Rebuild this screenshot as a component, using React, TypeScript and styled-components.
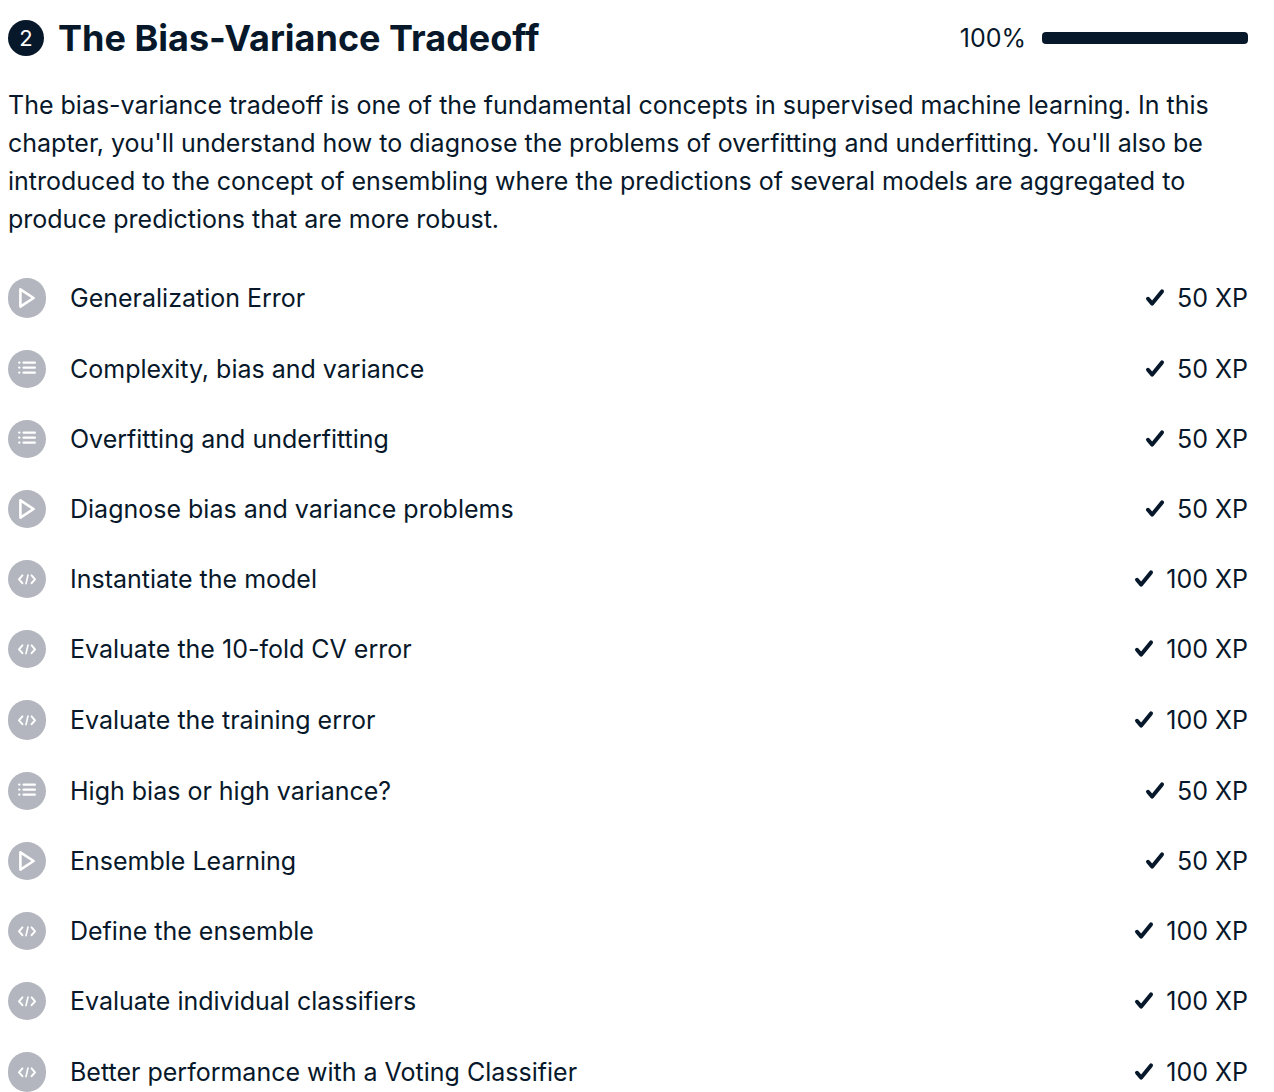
import React from "react";
import styled, { createGlobalStyle } from "styled-components";

const ink = "#07182a";

const GlobalStyle = createGlobalStyle`
  *, *::before, *::after { box-sizing: border-box; }
  body {
    margin: 0;
    background: #ffffff;
    color: ${ink};
    font-family: Inter, "Liberation Sans", sans-serif;
    font-size: 25px;
    line-height: 38px;
  }
`;

const Chapter = styled.main`
  padding: 18px 26px 0 8px;
`;

const Header = styled.header`
  display: flex;
  align-items: center;
  gap: 14px;
  height: 40px;
`;

const ChapterNumber = styled.span`
  display: flex;
  align-items: center;
  justify-content: center;
  flex: none;
  width: 36px;
  height: 36px;
  border-radius: 50%;
  background: ${ink};
  color: #ffffff;
  font-size: 22px;
  line-height: 36px;
`;

const Title = styled.h1`
  flex: 1;
  margin: 0;
  font-size: 36px;
  line-height: 40px;
  font-weight: 700;
`;

const Progress = styled.div`
  display: flex;
  align-items: center;
  gap: 16px;
`;

const Track = styled.div`
  width: 206px;
  height: 12px;
  border-radius: 4px;
  overflow: hidden;
  background: #e5e1da;
`;

const Fill = styled.div`
  height: 100%;
  background: ${ink};
`;

const Description = styled.p`
  margin: 28px 0 40px;
`;

const List = styled.ul`
  display: flex;
  flex-direction: column;
  gap: 32px;
  margin: 0;
  padding: 0;
  list-style: none;
`;

const Exercise = styled.a`
  display: flex;
  align-items: center;
  color: inherit;
  text-decoration: none;
`;

const Badge = styled.span<{ $tall?: boolean }>`
  display: flex;
  align-items: center;
  justify-content: center;
  flex: none;
  width: 38px;
  height: ${(p) => (p.$tall ? 40 : 38)}px;
  margin-right: 24px;
  border-radius: 19px;
  background: #b3b6be;
  color: #ffffff;
`;

const Name = styled.span`
  flex: 1;
`;

const Points = styled.span`
  display: flex;
  align-items: center;
  gap: 12px;
`;

type Kind = "video" | "choice" | "code";

const Glyph = ({ kind }: { kind: Kind }) => {
  if (kind === "video")
    return (
      <svg width="20" height="22" viewBox="0 0 20 22" fill="none" stroke="currentColor" strokeWidth="2.6" strokeLinejoin="round" aria-hidden="true">
        <path d="M3.4 2.4 L16.6 11 L3.4 19.6 Z" />
      </svg>
    );
  if (kind === "choice")
    return (
      <svg width="20" height="16" viewBox="0 0 20 16" fill="none" stroke="currentColor" strokeWidth="2.4" strokeLinecap="round" aria-hidden="true">
        <path d="M6.6 1.6H17.8M6.6 6.6H17.8M6.6 11.6H17.8" />
        <path d="M2.2 1.6H2.4M2.2 6.6H2.4M2.2 11.6H2.4" strokeWidth="2.3" />
      </svg>
    );
  return (
    <svg width="20" height="14" viewBox="0 0 20 14" fill="none" stroke="currentColor" strokeWidth="2" strokeLinecap="round" strokeLinejoin="round" aria-hidden="true">
      <path d="M5.4 3.4 L2 7.3 L5.4 11.2M14.6 3.4 L18 7.3 L14.6 11.2" />
      <path d="M11 3 L9 11.6" strokeWidth="1.6" />
    </svg>
  );
};

const Check = () => (
  <svg width="20" height="20" viewBox="0 0 20 20" fill="none" stroke="currentColor" strokeWidth="4" strokeLinecap="round" strokeLinejoin="round" role="img" aria-label="Completed">
    <path d="M3 10.8 L7.2 15.6 L17 3.4" />
  </svg>
);

const exercises: { name: string; kind: Kind; xp: number; tall?: boolean }[] = [
  { name: "Generalization Error", kind: "video", xp: 50, tall: true },
  { name: "Complexity, bias and variance", kind: "choice", xp: 50 },
  { name: "Overfitting and underfitting", kind: "choice", xp: 50 },
  { name: "Diagnose bias and variance problems", kind: "video", xp: 50 },
  { name: "Instantiate the model", kind: "code", xp: 100 },
  { name: "Evaluate the 10-fold CV error", kind: "code", xp: 100 },
  { name: "Evaluate the training error", kind: "code", xp: 100, tall: true },
  { name: "High bias or high variance?", kind: "choice", xp: 50 },
  { name: "Ensemble Learning", kind: "video", xp: 50 },
  { name: "Define the ensemble", kind: "code", xp: 100 },
  { name: "Evaluate individual classifiers", kind: "code", xp: 100 },
  { name: "Better performance with a Voting Classifier", kind: "code", xp: 100, tall: true },
];

const progress = 100;

export default function App() {
  return (
    <>
      <GlobalStyle />
      <Chapter>
        <Header>
          <ChapterNumber>2</ChapterNumber>
          <Title>The Bias-Variance Tradeoff</Title>
          <Progress>
            <span id="progress-label">{progress}%</span>
            <Track role="progressbar" aria-labelledby="progress-label" aria-valuenow={progress} aria-valuemin={0} aria-valuemax={100}>
              <Fill style={{ width: `${progress}%` }} />
            </Track>
          </Progress>
        </Header>
        <Description>
          The bias-variance tradeoff is one of the fundamental concepts in supervised machine
          learning. In this chapter, you'll understand how to diagnose the problems of overfitting
          and underfitting. You'll also be introduced to the concept of ensembling where the
          predictions of several models are aggregated to produce predictions that are more robust.
        </Description>
        <List>
          {exercises.map((e) => (
            <li key={e.name}>
              <Exercise href="#">
                <Badge $tall={e.tall}>
                  <Glyph kind={e.kind} />
                </Badge>
                <Name>{e.name}</Name>
                <Points>
                  <Check />
                  {e.xp} XP
                </Points>
              </Exercise>
            </li>
          ))}
        </List>
      </Chapter>
    </>
  );
}
